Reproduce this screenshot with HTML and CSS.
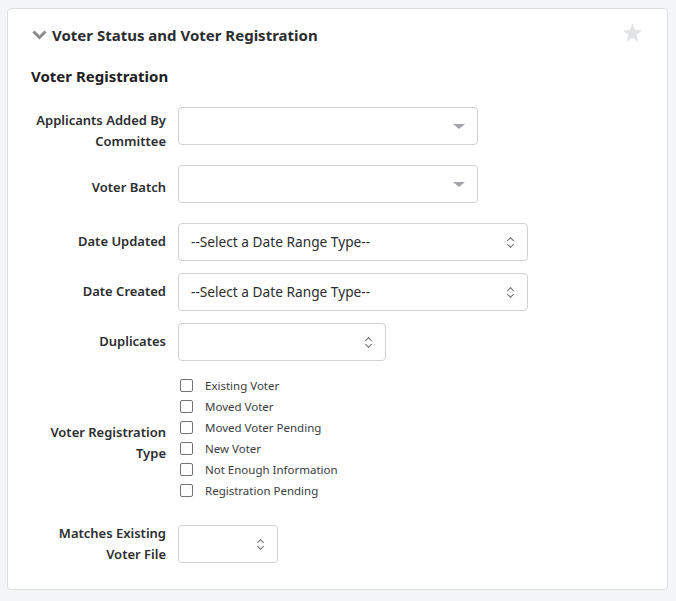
FILE: index.html
```html
<!doctype html>
<html lang="en">
<head>
    <meta charset="utf-8">
    <title>Voter Status and Voter Registration</title>
    <link rel="stylesheet" href="styles.css">
</head>
<body>
    <div class="card">
        <div class="card-head">
            <h2 class="card-title">
                <svg class="chevron" width="15" height="10" viewBox="0 0 15 10"><path d="M1.5 1.5 L7.5 7.5 L13.5 1.5" fill="none" stroke="#8c8c8c" stroke-width="3"/></svg>
                Voter Status and Voter Registration
            </h2>
            <svg class="star" width="21" height="20" viewBox="0 0 24 23"><path d="M12 0.5 L14.9 8.1 L23 8.5 L16.7 13.6 L18.9 21.5 L12 17 L5.1 21.5 L7.3 13.6 L1 8.5 L9.1 8.1 Z" fill="#e2e3e5"/></svg>
        </div>

        <h3 class="section-title">Voter Registration</h3>

        <div class="form">
            <div class="row row-applicants">
                <label class="label">Applicants Added By Committee</label>
                <div class="select select-300"><span class="caret"></span></div>
            </div>

            <div class="row row-batch">
                <label class="label">Voter Batch</label>
                <div class="select select-300"><span class="caret"></span></div>
            </div>

            <div class="row">
                <label class="label">Date Updated</label>
                <div class="select select-350">--Select a Date Range Type--<span class="updown"></span></div>
            </div>

            <div class="row">
                <label class="label">Date Created</label>
                <div class="select select-350">--Select a Date Range Type--<span class="updown"></span></div>
            </div>

            <div class="row">
                <label class="label">Duplicates</label>
                <div class="select select-208"><span class="updown"></span></div>
            </div>

            <div class="row row-checks">
                <label class="label">Voter Registration Type</label>
                <div class="checks">
                    <label class="check"><span class="box"></span>Existing Voter</label>
                    <label class="check"><span class="box"></span>Moved Voter</label>
                    <label class="check"><span class="box"></span>Moved Voter Pending</label>
                    <label class="check"><span class="box"></span>New Voter</label>
                    <label class="check"><span class="box"></span>Not Enough Information</label>
                    <label class="check"><span class="box"></span>Registration Pending</label>
                </div>
            </div>

            <div class="row row-last">
                <label class="label">Matches Existing Voter File</label>
                <div class="select select-100"><span class="updown"></span></div>
            </div>
        </div>
    </div>
</body>
</html>
```

FILE: styles.css
```css
body {
    font-family: "Noto Sans", "Open Sans", sans-serif;
    margin: 0;
    background: #f4f5f7;
    color: #25272a;
}
.card {
    margin: 8px 8px 0 7px;
    height: 582px;
    box-sizing: border-box;
    background: #fff;
    border: 1px solid #dcdfe2;
    border-radius: 4px;
    padding: 15px 24px 0 23px;
}
.card-head {
    display: flex;
    justify-content: space-between;
    align-items: flex-start;
}
.card-title {
    margin: 0;
    display: flex;
    align-items: center;
    gap: 5px;
    font-size: 15px;
    font-weight: 700;
    line-height: 21px;
    padding-top: 1px;
    color: #2b2d30;
}
.chevron {
    margin-top: -2px;
    margin-left: 1px;
}
.star {
    margin-top: -1px;
}
.section-title {
    margin: 20px 0 0 0;
    font-size: 15px;
    font-weight: 700;
    line-height: 21px;
    color: #1e2023;
}
.form {
    margin-top: 20px;
}
.row {
    display: grid;
    grid-template-columns: 135px auto;
    column-gap: 12px;
    align-items: start;
    margin-bottom: 12px;
}
.row .label {
    padding-top: 8px;
}
.row-applicants {
    margin-bottom: 13px;
}
.row-applicants .label {
    padding-top: 3px;
}
.row-batch {
    margin-bottom: 20px;
}
.row-batch .label {
    padding-top: 12px;
}
.label {
    text-align: right;
    font-size: 13px;
    font-weight: 600;
    line-height: 21px;
    color: #2b2d30;
}
.select {
    position: relative;
    box-sizing: border-box;
    height: 38px;
    border: 1px solid #cfd3d7;
    border-radius: 4px;
    background: #fff;
    padding: 0 12px;
    font-size: 13.7px;
    line-height: 36px;
    color: #2b2d30;
}
.select-300 { width: 300px; }
.select-350 { width: 350px; }
.select-208 { width: 208px; }
.select-100 { width: 100px; }
.caret {
    position: absolute;
    right: 12px;
    top: 16px;
    border-left: 6px solid transparent;
    border-right: 6px solid transparent;
    border-top: 5px solid #a3a5a8;
}
.updown {
    position: absolute;
    right: 12px;
    top: 13px;
    width: 8px;
    height: 11px;
}
.updown::before,
.updown::after {
    content: "";
    position: absolute;
    left: 1px;
    width: 4px;
    height: 4px;
    border-left: 1px solid #6c7075;
    border-top: 1px solid #6c7075;
}
.updown::before {
    top: 1px;
    transform: rotate(45deg);
}
.updown::after {
    bottom: 1px;
    transform: rotate(225deg);
}
.row-checks {
    margin-top: 14px;
    margin-bottom: 22px;
}
.row-checks .label {
    padding-top: 47px;
}
.checks {
    display: flex;
    flex-direction: column;
}
.check {
    display: flex;
    align-items: center;
    height: 21px;
    font-size: 11.5px;
    color: #3a3c3f;
}
.box {
    box-sizing: border-box;
    width: 13px;
    height: 13px;
    margin: 0 12px 0 2px;
    border: 1px solid #6f7276;
    border-radius: 2px;
    background: #fff;
}
.row-last {
    align-items: center;
    margin-bottom: 0;
}
.row-last .label {
    padding-top: 0;
}
```
